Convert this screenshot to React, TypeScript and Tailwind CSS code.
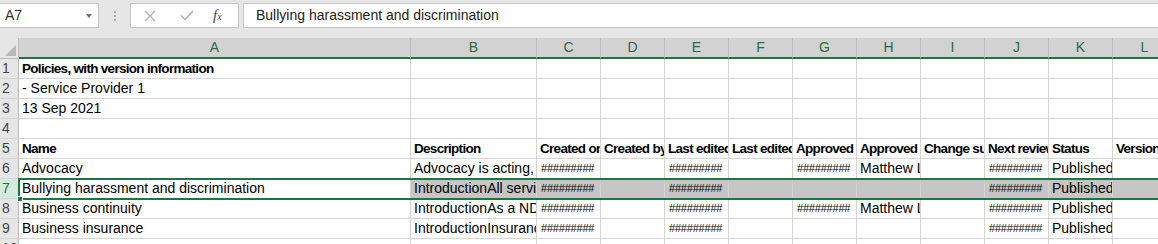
const cols = ["A", "B", "C", "D", "E", "F", "G", "H", "I", "J", "K", "L"];

const HASH = "#########";

type Row = { n: number; bold?: boolean; selected?: boolean; cells: string[] };

const rows: Row[] = [
  { n: 1, bold: true, cells: ["Policies, with version information"] },
  { n: 2, cells: ["- Service Provider 1"] },
  { n: 3, cells: ["13 Sep 2021"] },
  { n: 4, cells: [] },
  {
    n: 5,
    bold: true,
    cells: [
      "Name",
      "Description",
      "Created on",
      "Created by",
      "Last edited on",
      "Last edited by",
      "Approved on",
      "Approved by",
      "Change summary",
      "Next review",
      "Status",
      "Version",
    ],
  },
  {
    n: 6,
    cells: ["Advocacy", "Advocacy is acting, speaking or writing", HASH, "", HASH, "", HASH, "Matthew Lewis", "", HASH, "Published"],
  },
  {
    n: 7,
    selected: true,
    cells: ["Bullying harassment and discrimination", "IntroductionAll services", HASH, "", HASH, "", "", "", "", HASH, "Published"],
  },
  {
    n: 8,
    cells: ["Business continuity", "IntroductionAs a NDIS provider", HASH, "", HASH, "", HASH, "Matthew Lewis", "", HASH, "Published"],
  },
  {
    n: 9,
    cells: ["Business insurance", "IntroductionInsurance policies", HASH, "", HASH, "", "", "", "", HASH, "Published"],
  },
  { n: 10, cells: [] },
];

function Cell({ text, bold, gray }: { text?: string; bold?: boolean; gray?: boolean }) {
  const isHash = text === HASH;
  return (
    <div
      className={`h-[20px] overflow-hidden whitespace-nowrap border-r border-b border-[#d4d4d4] px-[3px] leading-[19px] text-[#000] ${
        gray ? "bg-[#c6c6c6]" : "bg-white"
      } ${bold ? "text-[13.5px] font-bold tracking-[-0.7px]" : isHash ? "pl-[4px] text-[11px] tracking-[-0.2px]" : "text-[14px]"}`}
    >
      {text}
    </div>
  );
}

export default function App() {
  return (
    <div className="relative h-[244px] w-[1158px] overflow-hidden bg-white font-['Liberation_Sans',Arial,sans-serif]">
      {/* Formula bar */}
      <div className="flex h-[38px] items-start bg-[#e6e6e6] pt-[3px]">
        <div className="flex h-[25px] w-[99px] items-center justify-between border border-l-0 border-[#c6c6c6] bg-white pl-[5px] pr-[6px]">
          <span className="text-[14px] text-[#333]">A7</span>
          <span className="h-0 w-0 border-x-[3.5px] border-t-[4px] border-x-transparent border-t-[#6e6e6e]" />
        </div>

        <div className="flex h-[25px] w-[31px] flex-col items-center justify-center gap-[2px]">
          <span className="h-[2px] w-[2px] bg-[#a8a8a8]" />
          <span className="h-[2px] w-[2px] bg-[#a8a8a8]" />
          <span className="h-[2px] w-[2px] bg-[#a8a8a8]" />
        </div>

        <div className="flex h-[25px] w-[109px] items-center border border-[#c6c6c6] bg-white">
          <svg width="12" height="12" viewBox="0 0 12 12" className="ml-[13px]">
            <path d="M1 1 L11 11 M11 1 L1 11" stroke="#b4b4b4" strokeWidth="1.4" fill="none" />
          </svg>
          <svg width="14" height="11" viewBox="0 0 14 11" className="ml-[24px]">
            <path d="M1 5.5 L5 9.5 L13 1" stroke="#b4b4b4" strokeWidth="1.6" fill="none" />
          </svg>
          <span className="ml-[19px] font-['Liberation_Serif',serif] text-[15px] italic leading-none text-[#444]">
            f<span className="text-[10px]">x</span>
          </span>
        </div>

        <div className="ml-[4px] flex h-[25px] flex-1 items-center border border-r-0 border-[#c6c6c6] bg-white pl-[12px] text-[14px] text-[#222]">
          Bullying harassment and discrimination
        </div>
      </div>

      {/* Sheet */}
      <div className="grid grid-cols-[19px_392px_126px_repeat(10,64px)]">
        {/* corner */}
        <div className="relative h-[21px] border-r border-b border-[#bcbcbc] bg-[#e6e6e6]">
          <span className="absolute right-[2px] bottom-[2px] h-0 w-0 border-b-[11px] border-l-[11px] border-b-[#b8b8b8] border-l-transparent" />
        </div>
        {cols.map((c) => (
          <div
            key={c}
            className="h-[21px] border-r border-b-2 border-r-[#bcbcbc] border-b-[#217346] bg-[#d2d2d2] text-center text-[14px] leading-[19px] text-[#2b6a44]"
          >
            {c}
          </div>
        ))}

        {rows.map((r) => (
          <div key={r.n} className="contents">
            <div
              className={`h-[20px] border-r border-b border-r-[#b8b8b8] border-b-[#d4d4d4] pl-[2px] text-[14px] leading-[19px] ${
                r.selected ? "bg-[#d3ecdd] text-[#217346]" : "bg-[#e6e6e6] text-[#444]"
              }`}
            >
              {r.n}
            </div>
            {cols.map((c, i) => (
              <Cell key={c} text={r.cells[i]} bold={r.bold} gray={r.selected && i > 0} />
            ))}
          </div>
        ))}
      </div>

      {/* selection outline for row 7 */}
      <div className="pointer-events-none absolute top-[178px] left-[18px] h-[22px] w-[1160px] border-2 border-[#217346]" />
      <div className="absolute top-[196px] left-[17px] h-[6px] w-[6px] border border-white bg-[#217346]" />
    </div>
  );
}
